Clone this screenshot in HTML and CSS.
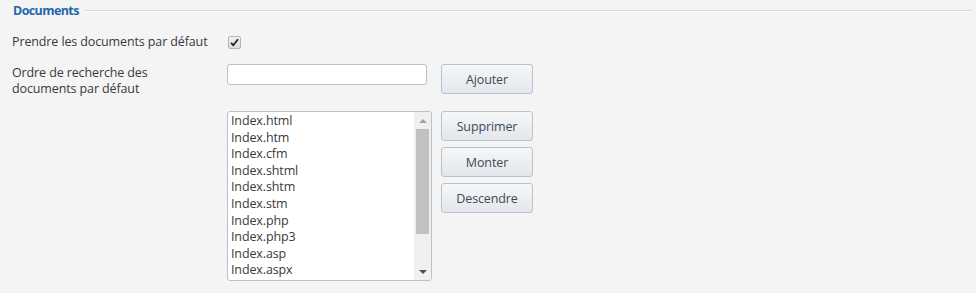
FILE: index.html
```html
<!DOCTYPE html>
<html lang="fr">
<head>
<meta charset="utf-8">
<title>Documents</title>
<link rel="stylesheet" href="styles.css">
</head>
<body>
<section class="group">
  <div class="legend"><span class="legend-title">Documents</span><span class="legend-line"></span></div>
  <div class="row row-check">
    <label class="label">Prendre les documents par défaut</label>
    <span class="checkbox"><svg width="9" height="9" viewBox="0 0 9 9"><path d="M1 4.8 L3.3 7.2 L8 1.3" fill="none" stroke="#222" stroke-width="1.8"/></svg></span>
  </div>
  <div class="row row-input">
    <label class="label label-2">Ordre de recherche des<br>documents par défaut</label>
    <input class="text" type="text">
    <button class="btn">Ajouter</button>
  </div>
  <div class="row row-list">
    <span class="label"></span>
    <div class="listbox">
      <ul class="items">
        <li>Index.html</li>
        <li>Index.htm</li>
        <li>Index.cfm</li>
        <li>Index.shtml</li>
        <li>Index.shtm</li>
        <li>Index.stm</li>
        <li>Index.php</li>
        <li>Index.php3</li>
        <li>Index.asp</li>
        <li>Index.aspx</li>
      </ul>
      <div class="scrollbar">
        <span class="arrow up"></span>
        <span class="track"><span class="thumb"></span></span>
        <span class="arrow down"></span>
      </div>
    </div>
    <div class="btn-col">
      <button class="btn">Supprimer</button>
      <button class="btn">Monter</button>
      <button class="btn">Descendre</button>
    </div>
  </div>
</section>
</body>
</html>
```
FILE: styles.css
```css
html, body {
  margin: 0;
  background: #f4f4f4;
}
body {
  font-family: "Open Sans", "DejaVu Sans", sans-serif;
  font-size: 12.5px;
  letter-spacing: -0.12px;
  color: #3a3a3a;
}
.group {
  padding: 2px 4px 0 12px;
}
.legend {
  display: flex;
  align-items: center;
  height: 16px;
}
.legend-title {
  font-weight: bold;
  color: #2268a8;
  font-size: 12.5px;
  letter-spacing: -0.6px;
  padding-left: 1px;
}
.legend-line {
  flex: 1;
  margin-left: 6px;
  border-top: 1px solid #d9d9d9;
  border-bottom: 1px solid #fcfcfc;
  margin-top: 2px;
}
.row {
  display: flex;
  align-items: flex-start;
}
.label {
  width: 215px;
  flex: none;
  line-height: 16px;
}
.row-check {
  margin-top: 16px;
  align-items: center;
  height: 16px;
}
.checkbox {
  width: 11px;
  height: 11px;
  border: 1px solid #b5b5b5;
  border-radius: 2px;
  background: linear-gradient(#f2f2f2, #dcdcdc);
  display: flex;
  align-items: center;
  justify-content: center;
  margin-left: 1px;
}
.row-input {
  margin-top: 14px;
}
.label-2 {
  margin-top: 1px;
}
.text {
  width: 200px;
  height: 21px;
  box-sizing: border-box;
  border: 1px solid #b8c2cc;
  border-radius: 3px;
  background: #fff;
  margin: 0 14px 0 0;
  padding: 0 4px;
}
.btn {
  width: 92px;
  height: 30px;
  box-sizing: border-box;
  border: 1px solid #b7c3cf;
  border-radius: 3px;
  background: linear-gradient(#f5f7f9, #e3e7eb);
  font-family: inherit;
  font-size: 12.5px;
  letter-spacing: -0.12px;
  color: #3d4a58;
  padding: 0;
  margin: 0;
}
.row-list {
  margin-top: 14px;
}
.listbox {
  width: 205px;
  height: 170px;
  box-sizing: border-box;
  border: 1px solid #b8c2cc;
  border-radius: 3px;
  background: #fff;
  display: flex;
  overflow: hidden;
  margin-right: 9px;
}
.items {
  list-style: none;
  margin: 0;
  padding: 1px 0 0 3px;
  flex: 1;
}
.items li {
  height: 16.6px;
  line-height: 16.6px;
  white-space: nowrap;
}
.scrollbar {
  width: 17px;
  background: #f0f0f0;
  display: flex;
  flex-direction: column;
  align-items: center;
}
.arrow {
  height: 17px;
  width: 17px;
  flex: none;
  display: flex;
  align-items: center;
  justify-content: center;
}
.arrow::before {
  content: "";
  border-left: 4px solid transparent;
  border-right: 4px solid transparent;
}
.up::before {
  border-bottom: 4px solid #a3a3a3;
}
.down::before {
  border-top: 4px solid #505050;
}
.track {
  flex: 1;
  width: 100%;
  display: flex;
  justify-content: center;
}
.thumb {
  width: 13px;
  height: 105px;
  background: #c1c1c1;
}
.btn-col {
  display: flex;
  flex-direction: column;
  gap: 6px;
}
```
